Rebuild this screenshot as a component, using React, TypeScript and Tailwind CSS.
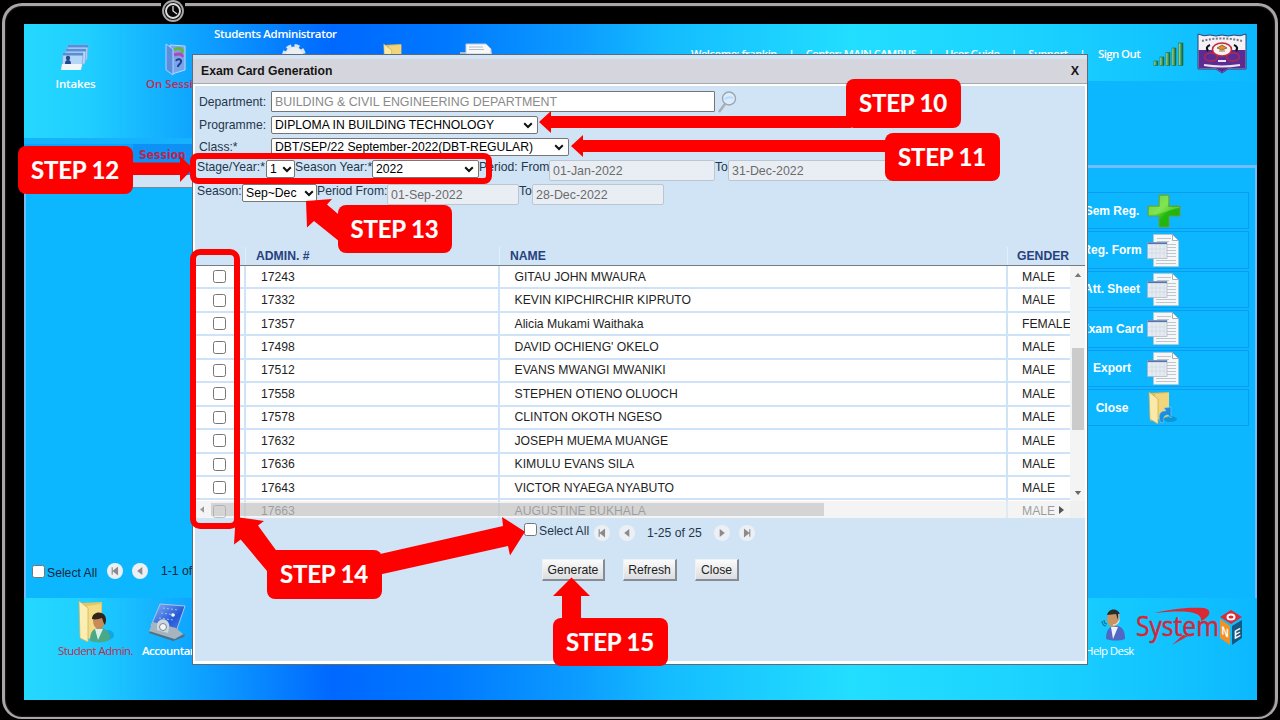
import React from "react";

const students = [
  ["17243", "GITAU JOHN MWAURA", "MALE"],
  ["17332", "KEVIN KIPCHIRCHIR KIPRUTO", "MALE"],
  ["17357", "Alicia Mukami Waithaka", "FEMALE"],
  ["17498", "DAVID OCHIENG' OKELO", "MALE"],
  ["17512", "EVANS MWANGI MWANIKI", "MALE"],
  ["17558", "STEPHEN OTIENO OLUOCH", "MALE"],
  ["17578", "CLINTON OKOTH NGESO", "MALE"],
  ["17632", "JOSEPH MUEMA MUANGE", "MALE"],
  ["17636", "KIMULU EVANS SILA", "MALE"],
  ["17643", "VICTOR NYAEGA NYABUTO", "MALE"],
  ["17663", "AUGUSTINE BUKHALA", "MALE"],
];

const gradient =
  "bg-[linear-gradient(90deg,#25d8ff_0%,#20cfff_5%,#10a8ff_13%,#0068ff_25%,#0078ff_34%,#0c9cff_45%,#14bcff_52%,#22deff_67%,#1cd4ff_80%,#10c0ff_95%,#0cb8ff_100%)]";

function Check({ className = "" }: { className?: string }) {
  return <span className={`block size-[13px] shrink-0 rounded-[2.500px] border border-[#767676] bg-white ${className}`} />;
}

function PagerButton({ kind }: { kind: "first" | "prev" | "next" | "last" }) {
  const flip = kind === "next" || kind === "last";
  return (
    <svg viewBox="0 0 16 16" className={`size-4 shrink-0 ${flip ? "-scale-x-100" : ""}`}>
      <circle cx="8" cy="8" r="8" fill="#ecf0f4" />
      {kind === "first" || kind === "last" ? (
        <path d="M5.200 4.200v7.600M10.500 4.700v6.600L6.300 8z" fill="#8b8b8b" stroke="#8b8b8b" strokeWidth="1.100" />
      ) : (
        <path d="M10.300 4v8L5.200 8z" fill="#8b8b8b" />
      )}
    </svg>
  );
}

function Select({ text, className }: { text: string; className: string }) {
  return (
    <div className={`flex shrink-0 items-center justify-between rounded-[2px] border border-[#767676] bg-white pl-[3px] pr-[4px] text-black ${className}`}>
      <span>{text}</span>
      <svg viewBox="0 0 10 7" className="h-[7px] w-[10px] shrink-0">
        <path d="M1.200 1.200 5 5l3.800-3.800" fill="none" stroke="#111" strokeWidth="2" />
      </svg>
    </div>
  );
}

function DateBox({ text, className }: { text: string; className: string }) {
  return (
    <div className={`flex h-[21px] shrink-0 items-center rounded-[2px] border border-[#bcc6d0] bg-[#e9eef5] pl-[3px] text-[12.400px] text-[#6b6b6b] ${className}`}>
      {text}
    </div>
  );
}

function ReportIcon() {
  return (
    <svg viewBox="0 0 33 33" className="h-[33px] w-[33px] shrink-0">
      <path d="M6.500.5h19l6 6v26h-25z" fill="#f6f7f9" stroke="#b9c3cc" strokeWidth=".7" />
      <path d="M25.500.5v6h6z" fill="#fff" stroke="#8ba1ac" strokeWidth=".8" />
      <path d="M10 4.500h14M10 7.500h12M20 10.500h9M20 13.500h9M20 16.500h9M20 19.500h9M20 22.500h9M9 26.500h20M9 29.500h20" stroke="#c0c5ca" strokeWidth="1.100" />
      <rect x=".5" y="8.500" width="19.500" height="16" fill="#e6ebf3" stroke="#a8b3c0" strokeWidth=".7" />
      <path d="M.5 9.300h19.500" stroke="#5474ae" strokeWidth="1.700" />
      <path d="M5 11v13M9 11v13M13 11v13M17 11v13M1 15h18M1 19h18" stroke="#ccd4de" strokeWidth=".6" />
    </svg>
  );
}

function PlusIcon() {
  return (
    <svg viewBox="0 0 34 34" className="h-[34px] w-[34px] shrink-0">
      <defs>
        <linearGradient id="plus" x1="0" y1="0" x2="1" y2="1">
          <stop offset="0" stopColor="#38b81c" />
          <stop offset=".42" stopColor="#66dd3a" />
          <stop offset=".58" stopColor="#22b80e" />
          <stop offset="1" stopColor="#1fae0a" />
        </linearGradient>
      </defs>
      <path d="M12 1h10v11h11v10H22v11H12V22H1V12h11z" fill="url(#plus)" stroke="#6a9f45" strokeWidth="1" />
      <path d="M13 2h8v11h11v1C24 15 20 19 2 21v-8h11z" fill="#a5f074" opacity=".45" />
    </svg>
  );
}

function FolderIcon({ arrow = false, className = "" }: { arrow?: boolean; className?: string }) {
  return (
    <svg viewBox="0 0 32 34" className={`shrink-0 ${className}`}>
      <path d="M3 2 22 1v24L3 30z" fill="#e2bd52" />
      <path d="m8 3 14-1v24L8 29z" fill="#f0d57b" />
      <path d="m2 1 9 7v25l-8-5z" fill="#faeaa9" stroke="#d1a849" strokeWidth=".7" />
      {arrow && (
        <>
          <ellipse cx="23" cy="28" rx="7" ry="3" fill="#0878b5" opacity=".5" />
          <path d="M14 32c-4-7-1-13 5-12l-2-3 7-1v11l-3-3c-4 0-5 3-4 7z" fill="#1c8edd" stroke="#8fd0fa" strokeWidth=".5" />
        </>
      )}
    </svg>
  );
}

function StudentIcon() {
  return (
    <svg viewBox="0 0 38 44" className="h-[44px] w-[38px] shrink-0">
      <path d="m5 3 20-1v34L5 39z" fill="#e8c65d" />
      <path d="m10 6 14-2v32l-14 3z" fill="#f3dc87" />
      <path d="m2 1 9 7v34l-8-4z" fill="#fbeeb3" stroke="#d1ad50" strokeWidth=".7" />
      <ellipse cx="31" cy="35" rx="6" ry="5" fill="#0879b4" opacity=".4" />
      <path d="M13 41c0-10 4-13 9-13 7 0 11 4 11 12-6 3-14 3-20 1z" fill="#4ba886" />
      <path d="m18 29 3 11 5-11z" fill="#d9efea" />
      <ellipse cx="22" cy="21" rx="6" ry="8" fill="#c78b5a" />
      <path d="M15 19c0-9 15-9 14 2l-1 4c-2-2-2-5-3-7-3 1-7 2-10 1z" fill="#30251d" />
    </svg>
  );
}

function AccountIcon() {
  return (
    <svg viewBox="0 0 38 40" className="h-[40px] w-[38px] shrink-0">
      <defs>
        <linearGradient id="scr" x1="0" y1="0" x2="1" y2="1">
          <stop offset="0" stopColor="#8ab6f5" />
          <stop offset=".6" stopColor="#2458d6" />
          <stop offset="1" stopColor="#5b8be6" />
        </linearGradient>
      </defs>
      <path d="m2 29 24 8 11-5-1 3-11 4L1 31z" fill="#596d7d" />
      <path d="m12 2 25 2-9 26-25-6z" fill="url(#scr)" stroke="#a8c6e8" />
      <path d="m5 20 23 6 7 6-8 5-26-8z" fill="#a5b4be" />
      <path d="M9 22a6 6 0 0 1 12 3l-1 6-11-3z" fill="#cfd6dc" />
      <circle cx="15" cy="25" r="3.500" fill="#f4f4f4" stroke="#768896" />
      <path d="m15 6 15 2M13 11l15 2M11 16l14 2" stroke="#a9ccff" strokeWidth=".9" strokeDasharray="2 2" />
      <circle cx="25" cy="13" r="1.800" fill="#fff" />
    </svg>
  );
}

function HelpIcon() {
  return (
    <svg viewBox="0 0 26 34" className="h-[34px] w-[26px] shrink-0">
      <path d="M5 31c0-9 3-13 10-13 6 0 9 4 9 13-6 2-13 2-19 0z" fill="#5267c1" />
      <path d="m10 19 2 12 5-12z" fill="#eef3ff" />
      <ellipse cx="12" cy="11" rx="6" ry="8" fill="#c99362" />
      <path d="M6 7C8-1 19 0 19 8l-1 5c-2-2-2-5-3-7-3 0-6 1-9 1z" fill="#292d30" />
      <path d="M18 6v7c-1 2-3 4-6 4" fill="none" stroke="#d8e7ef" strokeWidth="1.300" />
      <path d="M1 13c0 3 2 5 4 5M3 12c0 2 1 4 3 4" fill="none" stroke="#146b88" strokeWidth="1.100" />
    </svg>
  );
}

function CardsIcon() {
  return (
    <svg viewBox="0 0 30 28" className="h-[28px] w-[30px] shrink-0">
      {[
        [6, 1],
        [4, 5],
        [1, 9],
      ].map(([x, y]) => (
        <g key={x}>
          <path d={`M${x + 2} ${y}h20l-1 15-20 1z`} fill="#b4d6f7" stroke="#7fb0e4" strokeWidth=".8" />
          <path d={`M${x + 2} ${y}h20v2.500h-20z`} fill="#5a8fd8" />
        </g>
      ))}
      <path d="M2 20h20l-1 6H1z" fill="#f1f6fb" />
      <path d="M5 20c0-3 1-4 3-4s3 1 3 4z" fill="#21498d" />
      <circle cx="8" cy="14" r="2.200" fill="#21498d" />
    </svg>
  );
}

function BookIcon() {
  return (
    <svg viewBox="0 0 22 33" className="h-[33px] w-[22px] shrink-0">
      <path d="m5 2 15 1v24L7 31z" fill="#78a6ea" stroke="#b9d9ff" />
      <path d="M9 7c5-3 9-1 8 2s-5 3-6 2" fill="none" stroke="#6cb33e" strokeWidth="3" />
      <path d="M9 12c5-2 9-1 8 2" fill="none" stroke="#b443c7" strokeWidth="3" />
      <path d="M11 18c1-3 6-2 5 1s-3 2-3 5" fill="none" stroke="#293b8e" strokeWidth="2" />
      <path d="m1 1 7 5v26l-7-5z" fill="#5c8edd" stroke="#a9d1ff" />
    </svg>
  );
}

function Signal() {
  return (
    <svg viewBox="0 0 32 25" className="h-[25px] w-[32px] shrink-0">
      <defs>
        <linearGradient id="sig" x1="0" x2="1">
          <stop offset="0" stopColor="#e8f2a0" />
          <stop offset=".4" stopColor="#4fae62" />
          <stop offset="1" stopColor="#0d5d46" />
        </linearGradient>
      </defs>
      <g fill="url(#sig)" stroke="#24684a" strokeWidth=".6">
        <rect x="1" y="19" width="4" height="4.500" />
        <rect x="7" y="15" width="4" height="8.500" />
        <rect x="13" y="10.500" width="4" height="13" />
        <rect x="19" y="6" width="4" height="17.500" />
        <rect x="25.500" y="1" width="4.500" height="22.500" />
      </g>
    </svg>
  );
}

function Crest() {
  return (
    <svg viewBox="0 0 50 42" className="h-[42px] w-[50px] shrink-0">
      <path d="M1 1q6 3 12 1 6 2 12 0 6 2 12 0 6 2 12-1v35H31l-6 4-6-4H1z" fill="#f3f1f5" stroke="#33406f" />
      <path d="M1.500 17h47v18.500H31l-6 4-6-4H1.500z" fill="#5b2d94" />
      <path d="M5 8q20-5 40 0" fill="none" stroke="#77768b" strokeWidth="2" strokeDasharray="2 1.500" />
      <ellipse cx="14" cy="24" rx="6.500" ry="4" fill="none" stroke="#b02852" strokeWidth="1.400" />
      <ellipse cx="36" cy="24" rx="6.500" ry="4" fill="none" stroke="#b02852" strokeWidth="1.400" />
      <ellipse cx="25" cy="16.500" rx="9.500" ry="6.500" fill="#f7f2f0" stroke="#c5283c" strokeWidth="1.600" />
      <path d="m20 15 5-3 5 3-5 2zM22 18h6" fill="#ea8b24" stroke="#7c5a2e" strokeWidth=".8" />
      <path d="M13 12q-5 2-2 6M37 12q5 2 2 6" fill="none" stroke="#111" strokeWidth="2.200" />
      <path d="M21 28h8M7 32q18 3 36 0" stroke="#e9e2ef" strokeWidth="2" fill="none" />
    </svg>
  );
}

function SystemLogo() {
  return (
    <svg viewBox="0 0 110 42" className="h-[42px] w-[110px] shrink-0">
      <path d="M18 6C38 1 58 0 68 1c9 2 6 9-3 13 1-5-4-8-12-9-12-1-23 0-35 1z" fill="#d92a33" />
      <path d="M52 29 36 38l11-10z" fill="#d62b39" />
      <text x="0" y="29" fill="#d62636" stroke="#d62636" strokeWidth=".5" fontFamily="'Open Sans'" fontWeight="400" fontSize="28" textLength="83" lengthAdjust="spacingAndGlyphs">System</text>
      <path d="m95 3 11 7-11 7-11-7z" fill="#d92c37" />
      <path d="m84 12 10 7v19l-10-7z" fill="#f39122" />
      <path d="m96 19 10-6v18l-10 7z" fill="#145884" />
      <ellipse cx="95" cy="10" rx="3.500" ry="2.500" fill="none" stroke="#fff" strokeWidth="2" />
      <text x="0" y="0" fill="#fff" fontFamily="'Liberation Sans'" fontWeight="700" fontSize="11" transform="matrix(.9 .5 0 1.100 85.500 27)">N</text>
      <text x="0" y="0" fill="#fff" fontFamily="'Liberation Sans'" fontWeight="700" fontSize="11" transform="matrix(.9 -.5 0 1.100 98 32.500)">E</text>
    </svg>
  );
}

function Step({ n, className }: { n: number; className: string }) {
  return (
    <div className={`absolute flex w-[115px] items-center justify-center rounded-[8px] bg-[#fe0000] pb-px pr-px font-['Lato',sans-serif] text-[24px] font-bold leading-none tracking-[-0.200px] text-white [-webkit-text-stroke:0.200px_white] ${className}`}>
      STEP {n}
    </div>
  );
}

function Desktop() {
  const items = ["Sem Reg.", "Reg. Form", "Att. Sheet", "Exam Card", "Export", "Close"];
  return (
    <div className="flex h-[676px] w-[1233px] flex-col overflow-hidden bg-[#0cb7ff] font-['Open_Sans',sans-serif] text-[12px] text-white">
      <header className={`flex h-[57px] shrink-0 ${gradient}`}>
        <div className="w-[650px] shrink-0">
          <div className="flex h-[19px] items-center whitespace-nowrap pl-[190px] text-[11.500px] font-semibold tracking-[-0.340px]">Students Administrator</div>
          <div className="flex items-start">
            <div className="ml-[36px] mt-[1px]"><CardsIcon /></div>
            <div className="ml-[75px]"><BookIcon /></div>
            <svg viewBox="0 0 26 26" className="ml-[94px] size-[26px]">
              <circle cx="13" cy="13" r="9.500" fill="#dfe5ec" stroke="#dfe5ec" strokeWidth="5" strokeDasharray="4.500 3" />
              <circle cx="13" cy="13" r="8.500" fill="#edf0f3" />
            </svg>
            <FolderIcon className="ml-[75px] h-[30px] w-[28px]" />
            <svg viewBox="0 0 32 20" className="ml-[50px] h-[20px] w-[32px]">
              <path d="M0 9h32v11H0z" fill="#adbccc" />
              <path d="M6 1h20l5 5v5H6z" fill="#f7f8fa" stroke="#c5ccd3" />
              <path d="M9 4h14M9 6.500h15" stroke="#b3bdc6" />
            </svg>
          </div>
        </div>
        <nav className="flex flex-1 items-center pt-[3px] font-semibold">
          <div className="ml-[17px] flex w-[394px] justify-between whitespace-nowrap text-[11px] tracking-[-0.460px]">
            <span>Welcome: frankin</span><span>|</span><span>Center: MAIN CAMPUS</span><span>|</span><span>User Guide</span><span>|</span><span>Support</span><span>|</span>
          </div>
          <span className="ml-[13px] w-[55px] whitespace-nowrap text-[11.500px] tracking-[-0.620px]">Sign Out</span>
          <Signal />
          <div className="-mt-px ml-[12px]"><Crest /></div>
        </nav>
      </header>
      <div className="flex min-h-0 flex-1">
        <aside className="flex w-[900px] shrink-0 flex-col">
          <div className={`flex h-[57px] shrink-0 items-start bg-[length:1233px_57px] ${gradient}`}>
            <div className="-mt-[6px] w-[103px] text-center text-[11.500px] font-semibold tracking-[-0.150px]">Intakes</div>
            <div className="-mt-[6px] ml-[19px] text-[11.500px] font-semibold text-[#c42a55]">On Session</div>
          </div>
          <div className="h-[6px] shrink-0 bg-[#17b2ff]" />
          <div className="flex h-[31px] shrink-0 bg-[#0aa4ff]">
            <div className="w-[109px]" />
            <div className="flex-1 bg-[#0e91f5] pl-[6px] pt-[2px] font-['DejaVu_Sans_Condensed',sans-serif] text-[12px] font-bold text-[#bd244d]">Session</div>
          </div>
          <div className="h-[13px] shrink-0 border-b border-[#788796] bg-[#d1e4f5]" />
          <div className="flex flex-1 flex-col justify-end border-l-2 border-[#6fbdfa] pb-[15px]">
            <div className="flex items-center pl-[6px] font-['Liberation_Sans',sans-serif] text-[12.200px] leading-[20px] text-[#15273c]">
              <Check />
              <span className="ml-[2px] mr-[10px] w-[50px] whitespace-nowrap pt-[4px]">Select All</span>
              <PagerButton kind="first" />
              <span className="w-[9px]" />
              <PagerButton kind="prev" />
              <span className="ml-[13px]">1-1 of 1</span>
            </div>
          </div>
        </aside>
        <aside className="flex flex-1 flex-col">
          <div className="h-[84px] shrink-0" />
          <div className="flex flex-1 flex-col border-r-2 border-t-[3px] border-[#6fbdfa] pr-[6px] pt-[24px]">
            {items.map((item, i) => (
              <div key={item} className="mb-[2px] flex h-[37.400px] shrink-0 items-center border border-[#0a9cf2] font-['Liberation_Sans',sans-serif] text-[12px] font-bold">
                <span className="ml-[152px] w-[70px] text-center">{item}</span>
                {i === 0 ? <PlusIcon /> : i === 5 ? <FolderIcon arrow className="h-[34px] w-[32px]" /> : <ReportIcon />}
              </div>
            ))}
          </div>
        </aside>
      </div>
      <footer className={`flex h-[102px] shrink-0 ${gradient}`}>
        <div className="ml-[34px] flex w-[75px] flex-col items-center pt-[2px] text-[#c42a4c]">
          <StudentIcon />
          <span className="-mt-[2px] whitespace-nowrap text-[11.500px] tracking-[-0.580px]">Student Admin.</span>
        </div>
        <div className="ml-[9px] flex w-[66px] flex-col pt-[4px]">
          <div className="ml-[6px]"><AccountIcon /></div>
          <span className="whitespace-nowrap text-[11.500px] font-semibold tracking-[-0.500px]">Accountant</span>
        </div>
        <div className="ml-[877px] flex w-[52px] flex-col pt-[10px]">
          <div className="ml-[16px]"><HelpIcon /></div>
          <span className="whitespace-nowrap text-[11.500px] tracking-[-0.600px]">Help Desk</span>
        </div>
        <div className="-ml-[1px] pt-[9px]"><SystemLogo /></div>
      </footer>
    </div>
  );
}

function ActionButton({ text, className }: { text: string; className: string }) {
  return (
    <button className={`h-[22px] border border-b-2 border-r-2 border-[#edf1f4] border-b-[#848c94] border-r-[#848c94] bg-linear-to-b from-[#fbfbfb] to-[#dcdde0] pt-px text-[12.200px] leading-none text-[#222] ${className}`}>
      {text}
    </button>
  );
}

function Dialog() {
  return (
    <section className="absolute left-[192px] top-[54px] flex h-[611px] w-[896px] flex-col border border-[#5f6a74] bg-white font-['Liberation_Sans',sans-serif] text-[12.200px] text-[#25364b]">
      <div className="flex h-[29px] shrink-0 items-center justify-between border-b border-t-[4px] border-b-[#a6a9b1] border-t-[#d3e4f4] bg-[#d5d6dd] pl-[8px] pr-[8px] text-[12.200px] font-bold text-[#151515]">
        <span>Exam Card Generation</span>
        <span className="text-[12.500px]">X</span>
      </div>
      <div className="mx-[2px] mb-[3px] mt-[2px] flex flex-1 flex-col overflow-hidden bg-[#d1e4f5] leading-[14px]">
        <div className="flex h-[26px] shrink-0 items-center pl-[4px] pt-[5px]">
          <span className="w-[72px]">Department:</span>
          <div className="flex h-[21px] w-[444px] items-center rounded-[1px] border border-[#767676] bg-white pl-[3px] text-[12.400px] text-[#8a8a8a]">
            BUILDING &amp; CIVIL ENGINEERING DEPARTMENT
          </div>
          <svg viewBox="0 0 20 22" className="ml-[2px] h-[22px] w-[20px]">
            <path d="m8 13-6 8" stroke="#a8afb5" strokeWidth="2.500" />
            <circle cx="12" cy="7.500" r="6.500" fill="#dcecff" stroke="#9da5ad" strokeWidth="1.400" />
            <path d="M8 8q4-3 8-1" stroke="#b8d9fa" strokeWidth="2" fill="none" />
          </svg>
        </div>
        <div className="flex h-[22px] shrink-0 items-end pl-[4px]">
          <span className="w-[72px] pb-[2px]">Programme:</span>
          <Select text="DIPLOMA IN BUILDING TECHNOLOGY" className="h-[18px] w-[267px]" />
        </div>
        <div className="flex h-[22px] shrink-0 items-end pl-[4px]">
          <span className="w-[72px] pb-[2px]">Class:*</span>
          <Select text="DBT/SEP/22 September-2022(DBT-REGULAR)" className="h-[18px] w-[298px]" />
        </div>
        <div className="flex h-[25px] shrink-0 items-start whitespace-nowrap pl-[2px] pt-[4px]">
          <span className="w-[69px]">Stage/Year:*</span>
          <Select text="1" className="h-[18px] w-[29px] !pr-[2px]" />
          <span className="w-[77px]">Season Year:*</span>
          <Select text="2022" className="h-[18px] w-[107px]" />
          <span className="w-[70px]">Period: From</span>
          <DateBox text="01-Jan-2022" className="w-[166px]" />
          <span className="w-[13px]">To</span>
          <DateBox text="31-Dec-2022" className="w-[166px]" />
        </div>
        <div className="flex h-[66px] shrink-0 items-start whitespace-nowrap pl-[2px] pt-[3px]">
          <span className="w-[45px]">Season:</span>
          <Select text="Sep~Dec" className="h-[18px] w-[75px] !pr-[2px]" />
          <span className="w-[70px]">Period From:</span>
          <DateBox text="01-Sep-2022" className="w-[132px]" />
          <span className="w-[13px]">To</span>
          <DateBox text="28-Dec-2022" className="w-[132px]" />
        </div>
        <div className="flex h-[19px] shrink-0 items-center border-b-[1.500px] border-[#727d88] font-bold text-[#27417f]">
          <span className="flex h-full w-[51px] items-center border-r border-[#e2eefa]" />
          <span className="flex h-full w-[254px] items-center border-r border-[#e2eefa] pl-[10px]">ADMIN. #</span>
          <span className="flex h-full w-[508px] items-center border-r border-[#e2eefa] pl-[10px]">NAME</span>
          <span className="pl-[9px]">GENDER</span>
        </div>
        <div className="relative flex h-[252px] shrink-0 overflow-hidden bg-white">
          <div className="flex w-[875px] shrink-0 flex-col overflow-hidden text-[#1f1f1f]">
            {students.map(([id, name, gender]) => (
              <div key={id} className="flex h-[23.450px] shrink-0 border-b-2 border-[#cfe3f8]">
                <div className="flex w-[51px] shrink-0 items-center border-r-2 border-[#cfe3f8] pl-[18px]"><Check /></div>
                <div className="flex w-[254px] shrink-0 items-center border-r-2 border-[#cfe3f8] pl-[15px]">{id}</div>
                <div className="flex w-[508px] shrink-0 items-center border-r-2 border-[#cfe3f8] pl-[14.500px]">{name}</div>
                <div className="flex items-center pl-[14px]">{gender}</div>
              </div>
            ))}
          </div>
          <div className="flex w-[15px] shrink-0 flex-col items-center bg-[#f4f4f4]">
            <svg viewBox="0 0 8 5" className="mt-[7px] h-[4px] w-[8px]"><path d="m4 0 4 5H0z" fill="#777" /></svg>
            <div className="mt-[71px] h-[82px] w-[12px] bg-[#cbcbcb]" />
            <svg viewBox="0 0 8 5" className="mt-[61px] h-[4px] w-[8px]"><path d="m4 5 4-5H0z" fill="#666" /></svg>
          </div>
          <div className="absolute bottom-0 left-0 flex h-[17px] w-[890px] items-center bg-[#ededed]/60">
            <svg viewBox="0 0 5 8" className="ml-[5px] h-[7px] w-[4px]"><path d="m0 4 5-4v8z" fill="#999" /></svg>
            <div className="ml-[7px] h-[13px] w-[613px] bg-[#a0a0a0]/38" />
            <svg viewBox="0 0 5 8" className="ml-[235px] h-[8px] w-[5px]"><path d="m5 4-5-4v8z" fill="#555" /></svg>
          </div>
        </div>
        <div className="flex h-[29px] shrink-0 items-center pl-[329px]">
          <Check className="mb-[7px]" />
          <span className="ml-[2px] mr-[4px] w-[51px] whitespace-nowrap pb-[3px]">Select All</span>
          <PagerButton kind="first" />
          <span className="w-[9px]" />
          <PagerButton kind="prev" />
          <span className="ml-[12px] w-[67px] whitespace-nowrap">1-25 of 25</span>
          <PagerButton kind="next" />
          <span className="w-[9px]" />
          <PagerButton kind="last" />
        </div>
        <div className="flex pl-[347px] pt-[12px]">
          <ActionButton text="Generate" className="w-[63px]" />
          <ActionButton text="Refresh" className="ml-[18px] w-[54px]" />
          <ActionButton text="Close" className="ml-[18px] w-[44px]" />
        </div>
      </div>
    </section>
  );
}

export default function App() {
  return (
    <div className="relative h-[720px] w-[1280px] overflow-hidden bg-black">
      <div className="h-[719px] pl-[2px] pr-[2px] pt-[3px]">
        <div className="h-[716px] rounded-[20px] border-[3px] border-b-2 border-[#aaa5a7] bg-black pl-[19px] pt-[18px] shadow-[inset_0_0_2px_#555]">
          <Desktop />
        </div>
      </div>
      <div className="absolute left-[161px] top-0 h-[23px] w-[24px] bg-black">
        <svg viewBox="0 0 24 24" className="-mt-px size-6">
          <circle cx="12" cy="12" r="10" fill="#161616" stroke="#aaa" strokeWidth="1.800" />
          <circle cx="12" cy="12" r="7" fill="#080808" stroke="#ddd" strokeWidth="1.900" />
          <path d="M12 7v5l4 3" fill="none" stroke="#ddd" strokeWidth="1.300" />
        </svg>
      </div>
      <Dialog />
      <div className="absolute left-[190px] top-[153px] h-[31px] w-[302px] rounded-[8px] border-[6px] border-[#fe0000]" />
      <div className="absolute left-[190px] top-[249px] h-[280px] w-[50px] rounded-[10px] border-[6px] border-[#fe0000]" />
      <svg viewBox="0 0 1280 720" className="absolute left-0 top-0 h-[720px] w-[1280px]" fill="#fe0000">
        <path d="m539 122 12-11v5h300v12H551v5z" />
        <path d="m571 146 12-11v5h310v12H583v5z" />
        <path d="M130 162.500h50V156l13 12.500-13 13.500v-7h-50z" />
        <path d="m306 201 26-2-5 5.500 18 15.500v26l-31-25-7 6.500z" />
        <path d="m235.700 517 28.300 4-6 4.500 20 27.500v33l-11-15-26.300-31.500-6.700 5z" />
        <path d="m378 554.500 125-28.500-1-9 23 14.700-15 23.800-2-9.500-130 29z" />
        <path d="M571.500 577.500 590 596h-9v26h-19v-26h-9z" />
      </svg>
      <Step n={10} className="left-[846px] top-[79px] h-[49px]" />
      <Step n={11} className="left-[885px] top-[133px] h-[48px]" />
      <Step n={12} className="left-[18px] top-[146px] h-[48px]" />
      <Step n={13} className="left-[338px] top-[205px] h-[48px] !w-[114px]" />
      <Step n={14} className="left-[267px] top-[550px] h-[49px]" />
      <Step n={15} className="left-[553px] top-[618px] h-[48px]" />
    </div>
  );
}
